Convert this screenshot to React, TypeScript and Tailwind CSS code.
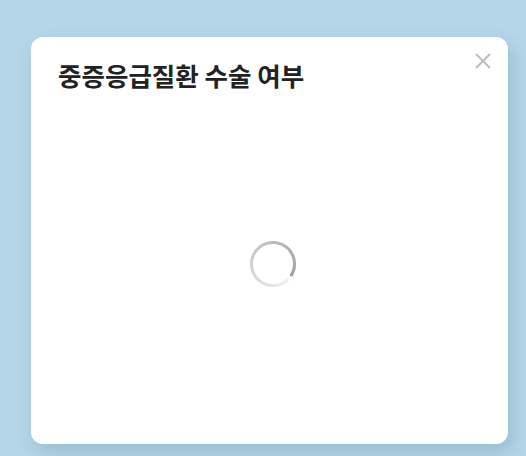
import React from "react";

function Spinner() {
  const N = 60;
  const r = 21.5;
  const cx = 25;
  const cy = 25;
  const startDeg = 45;
  const span = 345;
  const segs = [];
  for (let i = 0; i < N; i++) {
    const a0 = ((startDeg + (i * span) / N) * Math.PI) / 180;
    const a1 = ((startDeg + ((i + 1) * span) / N + 0.8) * Math.PI) / 180;
    const x0 = cx + r * Math.cos(a0);
    const y0 = cy + r * Math.sin(a0);
    const x1 = cx + r * Math.cos(a1);
    const y1 = cy + r * Math.sin(a1);
    const t = (i + 1) / N;
    segs.push(
      <path
        key={i}
        d={`M ${x0} ${y0} A ${r} ${r} 0 0 1 ${x1} ${y1}`}
        stroke="#a0a0a0"
        strokeOpacity={0.15 + 0.85 * Math.pow(t, 1.1)}
        strokeWidth={3}
        fill="none"
      />
    );
  }
  const ae = ((startDeg + span) * Math.PI) / 180;
  return (
    <svg width="50" height="50" viewBox="0 0 50 50">
      {segs}
      <circle cx={cx + r * Math.cos(ae)} cy={cy + r * Math.sin(ae)} r={1.8} fill="#a0a0a0" />
    </svg>
  );
}

export default function App() {
  return (
    <div
      className="w-[526px] h-[456px] bg-[#b5d6e8] pt-[37px] pl-[31px] overflow-hidden"
      style={{ fontFamily: '"Noto Sans CJK KR", "Noto Sans", sans-serif' }}
    >
      <div className="relative w-[477px] h-[407px] bg-white rounded-[12px] shadow-[4px_8px_18px_rgba(40,70,90,0.18)] flex flex-col">
        <div className="pl-[27px] pt-[22px] text-[25.5px] font-bold leading-[32px] text-[#222]">
          중증응급질환 수술 여부
        </div>
        <button className="absolute right-[16px] top-[15px] w-[18px] h-[18px] flex items-center justify-center">
          <svg width="16" height="16" viewBox="0 0 16 16">
            <path d="M1 1 L15 15 M15 1 L1 15" stroke="#bdbdbd" strokeWidth="2" />
          </svg>
        </button>
        <div className="flex-1 flex items-center justify-center pb-[8px] pl-[7px]">
          <Spinner />
        </div>
      </div>
    </div>
  );
}
